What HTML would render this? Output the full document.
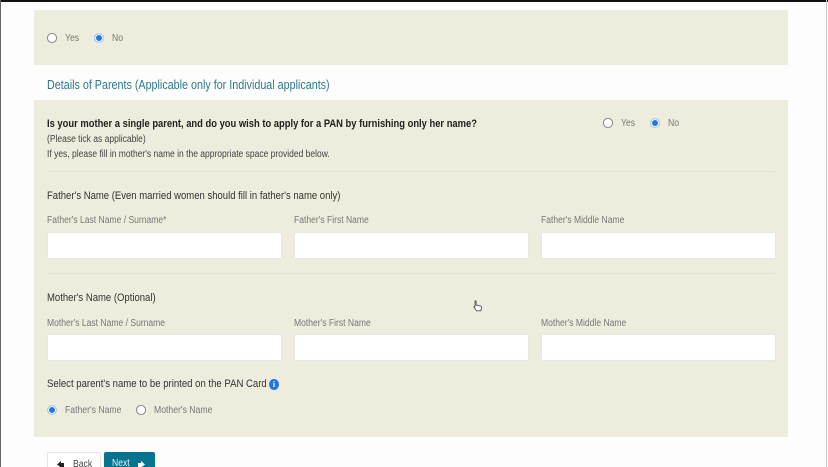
<!DOCTYPE html>
<html><head><meta charset="utf-8"><style>
html,body{margin:0;padding:0;width:828px;height:467px;overflow:hidden;background:#fdfdfd}
body{position:relative;font-family:"Liberation Sans",sans-serif}
#w{left:0;top:0;width:828px;height:467px;filter:blur(.35px);overflow:hidden}
div,span{position:absolute;white-space:nowrap}
.t,.l,.h,.o,.s{transform-origin:0 50%}
.p{background:#eeecdc}
.i{background:#fff;border:1px solid #e9e8dd;box-sizing:border-box;border-radius:2px;width:234.5px;height:27px}
.l{font-size:10px;color:#777;line-height:12px;transform:scaleX(.855)}
.h{font-size:11px;color:#333;line-height:12px;transform:scaleX(.865)}
.o{font-size:10px;color:#777;line-height:12px;transform:scaleX(.865)}
.s{font-size:10px;color:#444;line-height:12px;transform:scaleX(.85)}
.r{width:9.5px;height:9.5px;border-radius:50%;background:#fff;border:.7px solid #888;box-sizing:border-box}
.c{width:10px;height:10px;border-radius:50%;background:#2176e0;border:1px solid #a9c8ee;box-shadow:inset 0 0 0 1px #fff;box-sizing:border-box}
.d{height:1px;background:#e3e1d2}
</style></head><body><div id="w">
<div style="left:0;top:0;width:828px;height:2px;background:#111"></div>
<div style="left:0;top:0;width:1px;height:467px;background:#666"></div>
<div style="left:826px;top:0;width:1px;height:467px;background:#ccc"></div>

<div class="p" style="left:34px;top:10px;width:754px;height:55px"></div>
<div class="r" style="left:47px;top:33px"></div><div class="o" style="left:65px;top:32px;margin-top:1px">Yes</div>
<div class="c" style="left:93.5px;top:32.5px"></div><div class="o" style="left:112px;top:33px">No</div>

<div class="t" style="left:47px;top:78px;font-size:12.5px;line-height:15px;color:#2b7a8c;transform:scaleX(.86)">Details of Parents (Applicable only for Individual applicants)</div>

<div class="p" style="left:34px;top:100px;width:754px;height:337px"></div>
<div class="t" style="left:47px;top:117px;font-size:11px;line-height:14px;font-weight:bold;color:#222;transform:scaleX(.853)">Is your mother a single parent, and do you wish to apply for a PAN by furnishing only her name?</div>
<div class="r" style="left:603px;top:118px"></div><div class="o" style="left:621px;top:118px">Yes</div>
<div class="c" style="left:649.5px;top:118px"></div><div class="o" style="left:668px;top:118px">No</div>
<div class="s" style="left:47px;top:134px">(Please tick as applicable)</div>
<div class="s" style="left:47px;top:149px">If yes, please fill in mother's name in the appropriate space provided below.</div>
<div class="d" style="left:47px;top:171px;width:728px"></div>

<div class="h" style="left:47px;top:190px">Father's Name (Even married women should fill in father's name only)</div>
<div class="l" style="left:47px;top:215px">Father's Last Name / Surname*</div>
<div class="l" style="left:294px;top:215px">Father's First Name</div>
<div class="l" style="left:541px;top:215px">Father's Middle Name</div>
<div class="i" style="left:47px;top:232px"></div>
<div class="i" style="left:294px;top:232px"></div>
<div class="i" style="left:541px;top:232px"></div>
<div class="d" style="left:47px;top:273px;width:728px"></div>

<div class="h" style="left:47px;top:292px">Mother's Name (Optional)</div>
<div class="l" style="left:47px;top:318px">Mother's Last Name / Surname</div>
<div class="l" style="left:294px;top:318px">Mother's First Name</div>
<div class="l" style="left:541px;top:318px">Mother's Middle Name</div>
<div class="i" style="left:47px;top:334px"></div>
<div class="i" style="left:294px;top:334px"></div>
<div class="i" style="left:541px;top:334px"></div>

<div class="h" style="left:47px;top:378px;transform:scaleX(.87)">Select parent's name to be printed on the PAN Card</div>
<div style="left:269px;top:379px;width:10px;height:11px;border-radius:50%;background:#2176e0;color:#fff;font:bold 8px/11px 'Liberation Serif',serif;text-align:center">i</div>
<div class="c" style="left:46.5px;top:404.5px"></div><div class="o" style="left:65px;top:405px">Father's Name</div>
<div class="r" style="left:136px;top:405px"></div><div class="o" style="left:154px;top:405px">Mother's Name</div>

<div style="left:47px;top:452px;width:54px;height:20px;background:#fff;border:1px solid #e6e6e6;box-sizing:border-box;border-radius:2px"></div>
<svg style="position:absolute;left:57px;top:461px" width="8" height="6"><path d="M0 3.5L4 0V2H7V6H4V6.5Z" fill="#222"/></svg>
<div class="t" style="left:73px;top:459px;font-size:10px;line-height:12px;color:#444;transform:scaleX(.86)">Back</div>
<div style="left:104px;top:452px;width:51px;height:20px;background:#07748f;border-radius:2px"></div>
<div class="t" style="left:112px;top:458px;font-size:10px;line-height:12px;color:#e6f2f5;transform:scaleX(.86)">Next</div>
<svg style="position:absolute;left:138px;top:461px" width="8" height="6"><path d="M7 3.5L3 0V2H0V6H3V6.5Z" fill="#fff"/></svg>

<svg style="position:absolute;left:473px;top:300px" width="10" height="13" viewBox="0 0 10 13"><path d="M2 1.2C2 .5 3.1 .5 3.1 1.2V5L7.5 6C8.5 6.3 8.6 7 8.4 8L7.8 10.8H3.6L1 7.3C.6 6.6 1.4 6 2 6.6Z" fill="#fff" stroke="#555" stroke-width=".9"/></svg>
</div></body></html>
